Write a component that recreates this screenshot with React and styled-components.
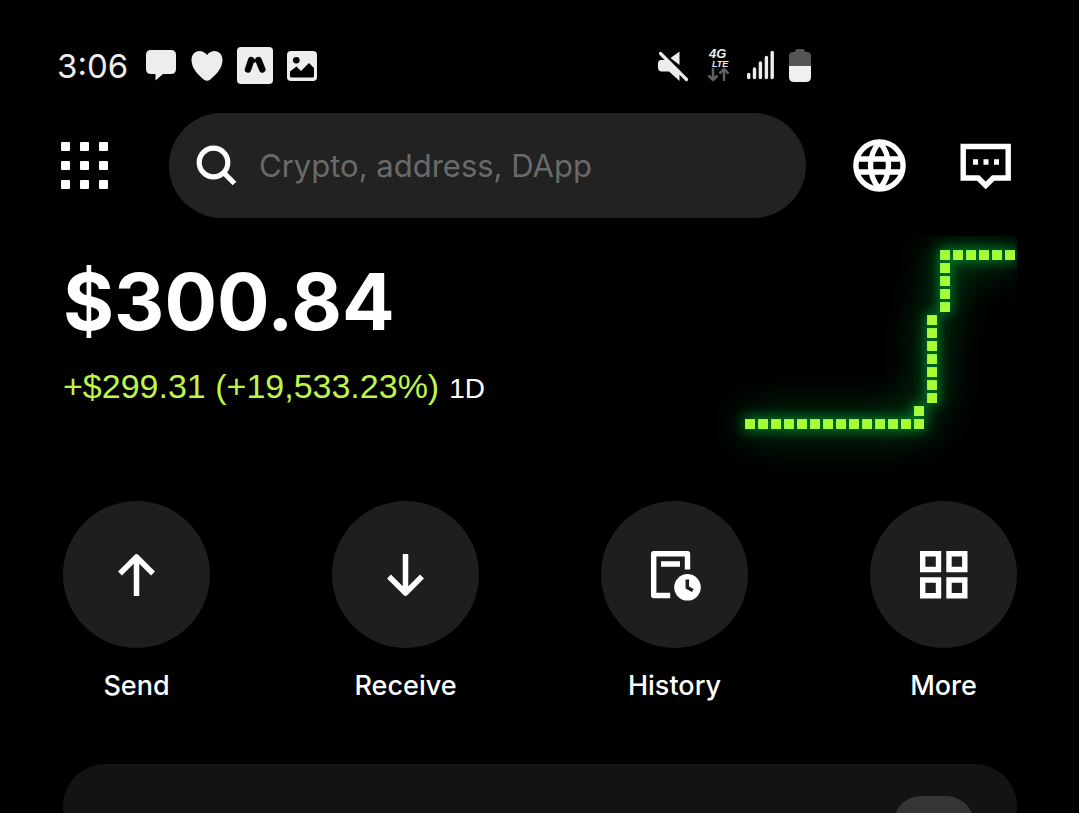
import React from "react";
import styled, { createGlobalStyle } from "styled-components";

const GlobalStyle = createGlobalStyle`
    * { box-sizing: border-box; }
    body {
        margin: 0;
        background: #000;
        color: #fff;
        font-family: Inter, "Liberation Sans", sans-serif;
    }
    button, input { font: inherit; color: inherit; }
`;

const Screen = styled.div`
    display: flex;
    flex-direction: column;
    height: 100vh;
    overflow: hidden;
    background: #000;
    svg { display: block; flex: none; }
`;

const StatusBar = styled.header`
    display: flex;
    justify-content: space-between;
    align-items: center;
    flex: none;
    height: 37px;
    margin-top: 47px;
    padding: 0 268px 0 57px;
    color: #ededed;
`;
const StatusGroup = styled.div`
    display: flex;
    align-items: center;
    gap: ${props => props.$gap}px;
`;
const Clock = styled.time`
    width: 74px;
    font-size: 33px;
    line-height: 36px;
`;

const TopBar = styled.div`
    display: flex;
    align-items: center;
    flex: none;
    gap: 47px;
    margin-top: 29px;
    padding: 0 62px 0 61px;
`;
const IconButton = styled.button`
    display: flex;
    align-items: center;
    justify-content: ${props => props.$align || "center"};
    flex: none;
    width: ${props => props.$width}px;
    height: 53px;
    padding: 0;
    border: 0;
    background: none;
`;
const SearchBox = styled.label`
    display: flex;
    align-items: center;
    flex: 1;
    min-width: 0;
    height: 105px;
    padding: 0 27px;
    gap: 22px;
    border-radius: 53px;
    background: #222;
`;
const SearchInput = styled.input`
    flex: 1;
    min-width: 0;
    padding: 0;
    border: 0;
    outline: 0;
    background: none;
    font-size: 31px;
    line-height: 40px;
    &::placeholder { color: #6a6a6a; opacity: 1; }
`;

const Portfolio = styled.section`
    display: flex;
    justify-content: space-between;
    flex: none;
    margin-top: 18px;
    padding: 0 62px 0 63px;
`;
const Amount = styled.h1`
    margin: 20px 0 0;
    font-size: 78px;
    font-weight: 700;
    line-height: 92px;
`;
const Change = styled.p`
    display: flex;
    align-items: baseline;
    gap: 10px;
    margin: 18px 0 0;
    font-family: "Liberation Sans", Arial, sans-serif;
    font-size: 34px;
    line-height: 40px;
    color: #bdf54a;
`;
const Period = styled.span`
    font-size: 28px;
    color: #fff;
`;

const Actions = styled.nav`
    display: flex;
    justify-content: space-between;
    flex: none;
    margin-top: 15px;
    padding: 0 62px 0 63px;
`;
const ActionButton = styled.button`
    display: flex;
    flex-direction: column;
    align-items: center;
    gap: 20px;
    width: 147px;
    padding: 0;
    border: 0;
    background: none;
    font-size: 27px;
    font-weight: 500;
    line-height: 36px;
`;
const ActionCircle = styled.span`
    display: flex;
    align-items: center;
    justify-content: center;
    width: 147px;
    height: 147px;
    border-radius: 50%;
    background: #1e1e1e;
`;

const Card = styled.section`
    display: flex;
    justify-content: flex-end;
    flex: none;
    margin: 60px 62px 0 63px;
    padding: 32px 43px;
    border-radius: 42px;
    background: #131313;
`;
const CardButton = styled.button`
    width: 81px;
    height: 81px;
    border: 0;
    border-radius: 28px;
    background: #353535;
`;

// [column, row] of every lit pixel, counted from the bottom left one
const pixels = [];
for (let i = 0; i <= 13; i++) pixels.push([i, 0]);
pixels.push([13, 1]);
for (let i = 2; i <= 8; i++) pixels.push([14, i]);
for (let i = 9; i <= 13; i++) pixels.push([15, i]);
for (let i = 16; i <= 20; i++) pixels.push([i, 13]);

const PixelChart = () => (
    <svg width="327" height="250" viewBox="0 0 327 250" role="img" aria-label="Balance chart">
        <defs>
            <filter id="near" filterUnits="userSpaceOnUse" x="-60" y="-60" width="460" height="380" colorInterpolationFilters="sRGB">
                <feGaussianBlur stdDeviation="6" />
            </filter>
            <filter id="far" filterUnits="userSpaceOnUse" x="-60" y="-60" width="460" height="380" colorInterpolationFilters="sRGB">
                <feGaussianBlur stdDeviation="21" />
            </filter>
            <g id="trail">
                {pixels.map(([c, r]) => (
                    <rect key={c + "-" + r} x={55 + c * 13} y={183 - r * 13} width="10" height="10" />
                ))}
            </g>
            <g id="halo">
                {pixels.map(([c, r]) => (
                    <rect key={c + "-" + r} x={53 + c * 13} y={181 - r * 13} width="14" height="14" />
                ))}
            </g>
        </defs>
        <use href="#halo" fill="#009030" filter="url(#far)" opacity=".75" />
        <use href="#halo" fill="#00a030" filter="url(#near)" opacity=".7" />
        <use href="#trail" fill="#a9fc33" />
        {pixels.map(([c, r]) => (
            <path
                key={c + "-" + r}
                d={`M${55.5 + c * 13} ${193 - r * 13}v-9.5h9.5`}
                fill="none"
                stroke="#8cf552"
            />
        ))}
    </svg>
);

const ChatIcon = () => (
    <svg width="32" height="32" viewBox="0 0 32 32" fill="currentColor">
        <path d="M6 0h20q5 0 5 5v14q0 5-5 5h-8l-7.500 6.500V24H6q-5 0-5-5V5q0-5 5-5Z" />
    </svg>
);
const HeartIcon = () => (
    <svg width="32" height="32" viewBox="0 0 32 32" fill="currentColor">
        <path d="M16 5C13.500 2 11 1 8.500 1 4 1 .5 4.500.5 10c0 9 7.500 15.500 12.500 19.700q3 2.300 6 0C24 25.500 31.500 19 31.500 10c0-5.500-3.500-9-8-9-2.500 0-5 1-7.500 4Z" />
    </svg>
);
const MountainIcon = () => (
    <svg width="36" height="37" viewBox="0 0 36 37">
        <rect width="36" height="37" rx="4" fill="#ededed" />
        <path d="M11 22.500 14.200 13M21.500 13l3.800 9.500" fill="none" stroke="#000" strokeWidth="6.500" strokeLinecap="round" />
        <path d="M16 12.500h3v2l-1.500 1.500-1.500-1.500Z" />
    </svg>
);
const PictureIcon = () => (
    <svg width="30" height="30" viewBox="0 0 30 30">
        <rect width="30" height="30" rx="4" fill="#ededed" />
        <circle cx="9.300" cy="9.300" r="3.300" />
        <path d="M3 20.500 9.500 15.500 14 20l8-8 5 5v8q0 1.500-1.500 1.500h-21Q3 26.500 3 25Z" />
    </svg>
);
const MutedIcon = () => (
    <svg width="35" height="32" viewBox="0 0 35 32" fill="currentColor">
        <path d="M22.500 1.500V15L13.500 8ZM4 10h6.500L22.500 22v9L12 21.500H5q-4 0-4-4V14q0-4 3-4Z" />
        <path d="m3.500 3.500 26 26" stroke="currentColor" strokeWidth="3.200" strokeLinecap="round" />
    </svg>
);
const NetworkIcon = () => (
    <svg
        width="24"
        height="40"
        viewBox="0 0 24 40"
        fontFamily="Liberation Sans, Arial, sans-serif"
        fontStyle="italic"
        fontWeight="700"
        fill="currentColor"
    >
        <text x="2" y="12" fontSize="13">4G</text>
        <text x="5" y="21" fontSize="9">LTE</text>
        <path d="M6 22v12M1.500 29.500 6 34l4.500-4.500M17 35V23M12.500 27.500 17 23l4.500 4.500" fill="none" stroke="#606060" strokeWidth="2.500" />
    </svg>
);
const SignalIcon = () => (
    <svg width="28" height="32" viewBox="0 0 28 32" stroke="currentColor" strokeWidth="3.400" strokeLinecap="round">
        <path d="M2.700 24.500v3M8.500 19v8.500M14.400 13v14.500M20.400 7.500v20M26.200 2.500v25" />
    </svg>
);
const BatteryIcon = () => (
    <svg width="22" height="33" viewBox="0 0 22 33">
        <path d="M6 3q0-3 3-3h4q3 0 3 3h2q4 0 4 4v10H0V7q0-4 4-4Z" fill="#555" />
        <path d="M0 17h22v11q0 5-5 5H5q-5 0-5-5Z" fill="#f0f0f0" />
    </svg>
);

const AppsIcon = () => (
    <svg width="47" height="47" viewBox="0 0 47 47" fill="#fff">
        {[0, 19, 38].map(y => [0, 19, 38].map(x => (
            <rect key={x + "-" + y} x={x} y={y} width="9" height="9" rx="1" />
        )))}
    </svg>
);
const SearchIcon = () => (
    <svg width="41" height="41" viewBox="0 0 41 41" fill="none" stroke="#fff" strokeWidth="5.200">
        <circle cx="17.500" cy="17.500" r="14.300" />
        <path d="m27.500 27.500 11 11" />
    </svg>
);
const GlobeIcon = () => (
    <svg width="53" height="53" viewBox="0 0 53 53" fill="none" stroke="#fff" strokeWidth="5.400">
        <circle cx="26.500" cy="26.500" r="23.600" />
        <path d="M5 20h43M5 33h43M26.500 3c-12 14-12 33 0 47M26.500 3c12 14 12 33 0 47" />
    </svg>
);
const MessageIcon = () => (
    <svg width="52" height="47" viewBox="0 0 52 47" fill="none" stroke="#fff" strokeWidth="5.400">
        <path d="M4.200 4.500h45V36H34.200l-7.500 7.500-7.500-7.500H4.200Z" />
        <path d="M14 20h5M24.500 20h5M35 20h5" />
    </svg>
);
const ArrowIcon = ({ down }) => (
    <svg width="40" height="44" viewBox="0 0 40 44" fill="none" stroke="#fff" strokeWidth="5.500" strokeLinejoin="round">
        <path d={down ? "M19.500 1v39M3 23.500 19.500 40l16.500-16.500" : "M19.500 43V4M3 20.500 19.500 4l16.500 16.500"} />
    </svg>
);
const HistoryIcon = () => (
    <svg width="52" height="52" viewBox="0 0 52 52" fill="none" stroke="#fff" strokeWidth="5.400">
        <path d="M38.500 20.500V4.700H4.700v41.800h16.500M12 15h19" strokeLinejoin="round" />
        <circle cx="38.500" cy="38.300" r="13.300" fill="#fff" stroke="none" />
        <path d="M38.300 30.500v8l5.500 3" stroke="#1e1e1e" strokeWidth="3.500" />
    </svg>
);
const MoreIcon = () => (
    <svg width="48" height="48" viewBox="0 0 48 48" fill="none" stroke="#fff" strokeWidth="5.400">
        <path d="M2.700 2.700h15.800v15.800H2.700ZM29 2.700h15.800v15.800H29ZM2.700 29h15.800v15.800H2.700ZM29 29h15.800v15.800H29Z" />
    </svg>
);

const actions = [
    { label: "Send", icon: <ArrowIcon /> },
    { label: "Receive", icon: <ArrowIcon down /> },
    { label: "History", icon: <HistoryIcon /> },
    { label: "More", icon: <MoreIcon /> },
];

export default function App() {
    return (
        <Screen>
            <GlobalStyle />
            <StatusBar>
                <StatusGroup $gap={14}>
                    <Clock>3:06</Clock>
                    <ChatIcon />
                    <HeartIcon />
                    <MountainIcon />
                    <PictureIcon />
                </StatusGroup>
                <StatusGroup $gap={15}>
                    <MutedIcon />
                    <NetworkIcon />
                    <SignalIcon />
                    <BatteryIcon />
                </StatusGroup>
            </StatusBar>

            <TopBar>
                <IconButton $width={61} $align="flex-start" aria-label="Apps"><AppsIcon /></IconButton>
                <SearchBox>
                    <SearchIcon />
                    <SearchInput type="text" aria-label="Search" placeholder="Crypto, address, DApp" />
                </SearchBox>
                <IconButton $width={53} aria-label="Networks"><GlobeIcon /></IconButton>
                <IconButton $width={64} aria-label="Messages"><MessageIcon /></IconButton>
            </TopBar>

            <Portfolio>
                <div>
                    <Amount>$300.84</Amount>
                    <Change>
                        +$299.31 (+19,533.23%)
                        <Period>1D</Period>
                    </Change>
                </div>
                <PixelChart />
            </Portfolio>

            <Actions>
                {actions.map(({ label, icon }) => (
                    <ActionButton key={label}>
                        <ActionCircle>{icon}</ActionCircle>
                        {label}
                    </ActionButton>
                ))}
            </Actions>

            <Card>
                <CardButton aria-label="Close" />
            </Card>
        </Screen>
    );
}
